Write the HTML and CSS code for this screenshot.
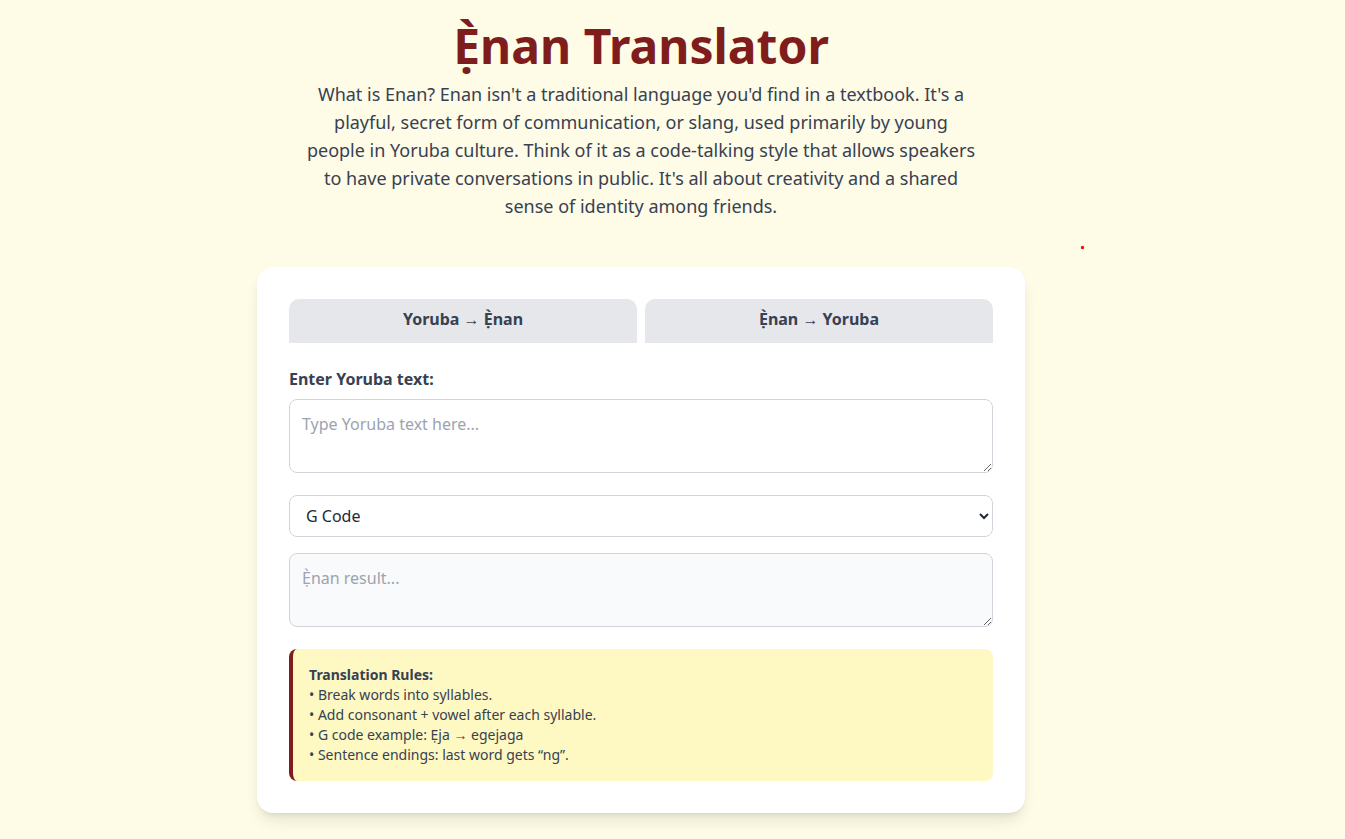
FILE: index.html
```html
<!DOCTYPE html>
<html lang="en">
<head>
    <meta charset="UTF-8">
    <meta name="viewport" content="width=device-width, initial-scale=1.0">
    <title>Ẹ̀nan Translator</title>
    <link rel="stylesheet" href="styles.css">
</head>
<body>
    <main class="page">
        <h1 class="title">Ẹ̀nan Translator</h1>
        <p class="intro">What is Enan? Enan isn't a traditional language you'd find in a textbook. It's a playful, secret form of communication, or slang, used primarily by young people in Yoruba culture. Think of it as a code-talking style that allows speakers to have private conversations in public. It's all about creativity and a shared sense of identity among friends.</p>

        <section class="card">
            <div class="tabs">
                <button class="tab">Yoruba → Ẹ̀nan</button>
                <button class="tab">Ẹ̀nan → Yoruba</button>
            </div>

            <label class="label" for="source">Enter Yoruba text:</label>
            <textarea id="source" class="field" rows="2" placeholder="Type Yoruba text here..."></textarea>

            <select class="field select">
                <option>G Code</option>
                <option>B Code</option>
                <option>S Code</option>
            </select>

            <textarea class="field result" rows="2" placeholder="Ẹ̀nan result..." readonly></textarea>

            <div class="rules">
                <strong>Translation Rules:</strong><br>
                • Break words into syllables.<br>
                • Add consonant + vowel after each syllable.<br>
                • G code example: Ẹja → egejaga<br>
                • Sentence endings: last word gets “ng”.
            </div>
        </section>
    </main>
    <span class="dot"></span>
</body>
</html>
```

FILE: styles.css
```css
body {
    margin: 0;
    padding: 22px 63px 27px 0;
    background-color: #fefbe7;
    font-family: "Noto Sans", "Open Sans", sans-serif;
    color: #374151;
}
.page {
    display: flex;
    flex-direction: column;
    align-items: center;
}
.title {
    margin: 0 0 10px;
    font-size: 48px;
    line-height: 48px;
    font-weight: 700;
    color: #7f1d1d;
}
.intro {
    max-width: 672px;
    margin: 0 0 47px;
    font-size: 18px;
    line-height: 28px;
    text-align: center;
}
.card {
    width: 768px;
    box-sizing: border-box;
    padding: 32px;
    background: #fff;
    border-radius: 16px;
    box-shadow: 0 10px 15px -3px rgba(0, 0, 0, 0.1), 0 4px 6px -4px rgba(0, 0, 0, 0.1);
}
.tabs {
    display: flex;
    gap: 8px;
    margin-bottom: 24px;
}
.tab {
    flex: 1;
    height: 44px;
    padding: 8px 0 12px;
    border: none;
    border-radius: 10px 10px 0 0;
    background: #e5e7eb;
    font-family: inherit;
    font-size: 16px;
    line-height: 24px;
    font-weight: 700;
    color: #374151;
}
.label {
    display: block;
    margin-bottom: 8px;
    font-size: 16px;
    line-height: 24px;
    font-weight: 700;
}
.field {
    display: block;
    width: 100%;
    box-sizing: border-box;
    margin: 0 0 22px;
    padding: 12px;
    border: 1px solid #d1d5db;
    border-radius: 8px;
    background: #fff;
    font-family: inherit;
    font-size: 16px;
    line-height: 24px;
    color: #1f2937;
}
.field::placeholder {
    color: #9ca3af;
}
.select {
    height: 42px;
    padding: 8px 8px 8px 12px;
    margin-bottom: 16px;
}
.result {
    background: #f9fafb;
}
.rules {
    padding: 16px;
    border-left: 4px solid #7f1d1d;
    border-radius: 8px;
    background: #fef8c3;
    font-size: 14px;
    line-height: 20px;
}
.dot {
    position: absolute;
    left: 1081px;
    top: 246px;
    width: 3px;
    height: 3px;
    border-radius: 50%;
    background: #e01010;
    box-shadow: 0 0 1px #e01010;
}
```
